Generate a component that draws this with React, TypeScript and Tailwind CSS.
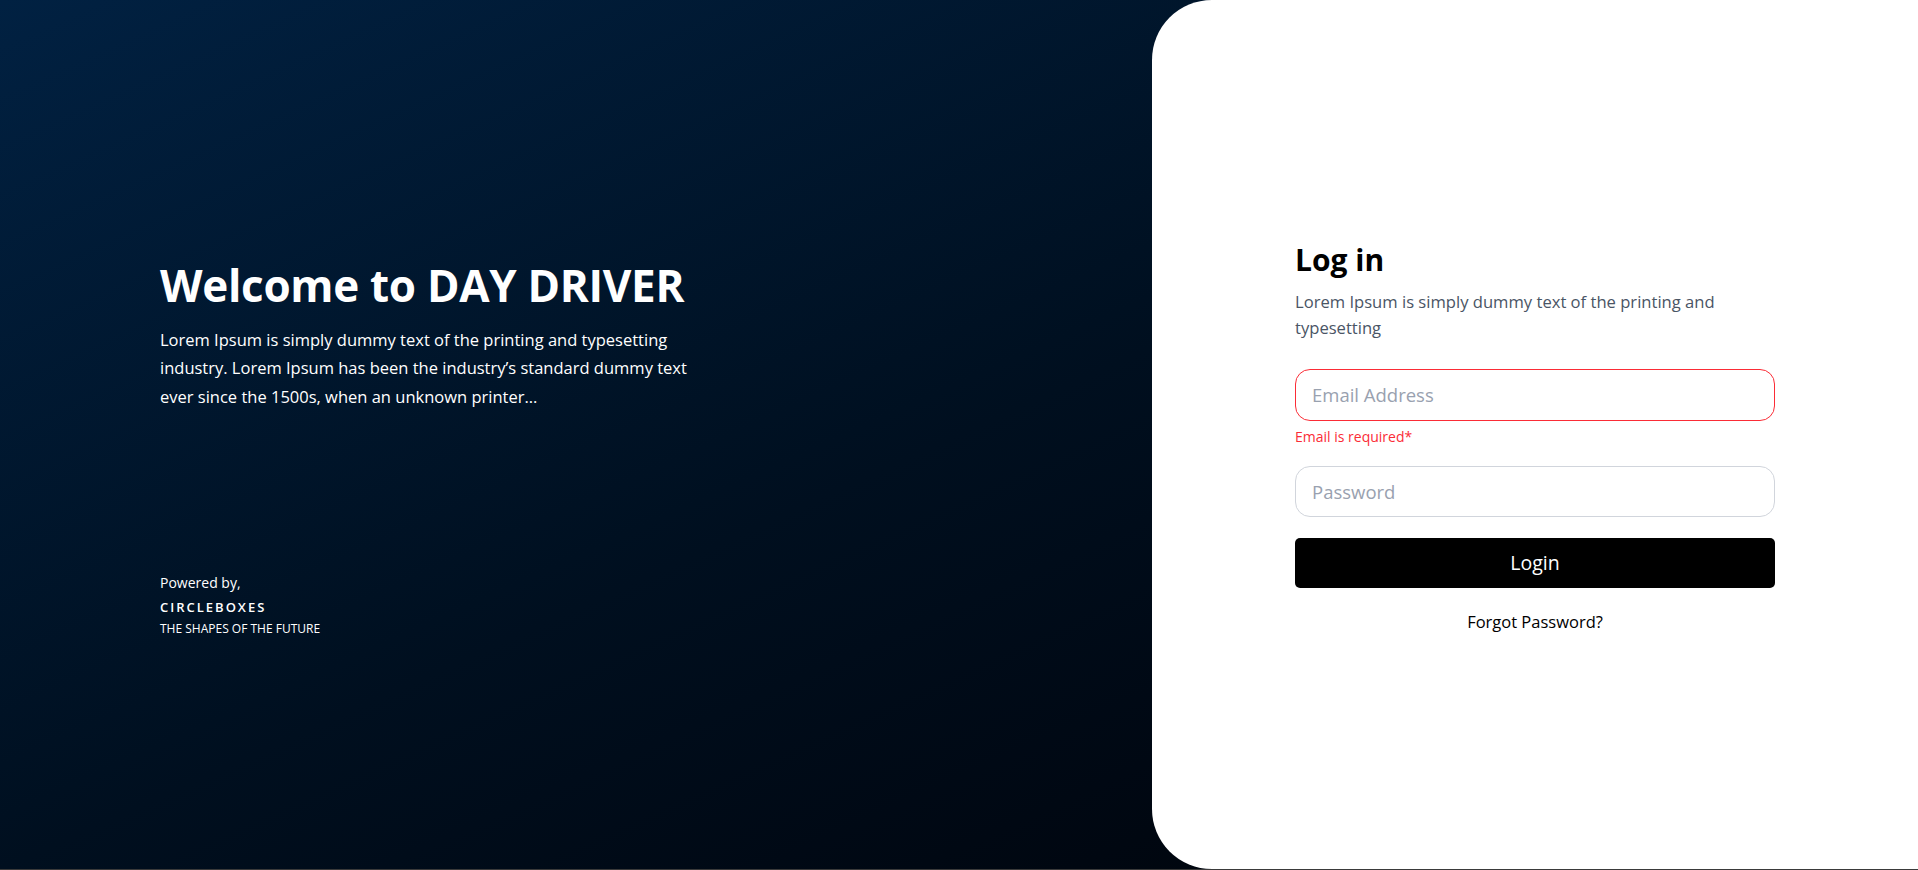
import React from 'react';

const font = { fontFamily: '"Open Sans", "Noto Sans", sans-serif' };

const App: React.FC = () => {
  return (
    <div
      className="flex h-[870px] w-full bg-linear-to-br from-[#012142] via-[#000f1f] to-[#000307] border-b border-[#3a3a3a]"
      style={font}
    >
      {/* left intro */}
      <div className="flex flex-1 flex-col justify-center pl-[160px] pt-[28px] text-white">
        <h1 className="text-[44px] font-bold leading-tight tracking-[-0.3px]">Welcome to DAY DRIVER</h1>
        <p className="mt-[13px] w-[560px] text-[16.5px] leading-[28.5px]">
          Lorem Ipsum is simply dummy text of the printing and typesetting industry. Lorem Ipsum has been the
          industry’s standard dummy text ever since the 1500s, when an unknown printer...
        </p>
        <div className="mt-[160px]">
          <p className="text-[14px] leading-6">Powered by,</p>
          <p className="text-[13px] font-semibold tracking-[2px] leading-6">CIRCLEBOXES</p>
          <p className="text-[12px] leading-5">THE SHAPES OF THE FUTURE</p>
        </div>
      </div>

      {/* login card */}
      <div className="flex w-[766px] items-center justify-center rounded-l-[60px] bg-white pt-[6px]">
        <form className="w-[480px]" onSubmit={(e) => e.preventDefault()}>
          <h2 className="text-[30px] font-bold leading-[36px] text-black">Log in</h2>
          <p className="mt-[11px] text-[16.6px] leading-[26px] text-gray-600">
            Lorem Ipsum is simply dummy text of the printing and typesetting
          </p>
          <input
            type="email"
            placeholder="Email Address"
            className="mt-[28px] h-[52px] w-full rounded-[15px] border border-red-500 px-4 text-[18.5px] outline-none placeholder:text-gray-400"
          />
          <p className="mt-[6px] text-[14px] leading-5 text-red-500">Email is required*</p>
          <input
            type="password"
            placeholder="Password"
            className="mt-[19px] h-[51px] w-full rounded-[15px] border border-gray-300 px-4 text-[18.5px] outline-none placeholder:text-gray-400"
          />
          <button
            type="submit"
            className="mt-[21px] h-[50px] w-full rounded-[5px] bg-black text-[19.5px] text-white"
          >
            Login
          </button>
          <p className="mt-[21px] text-center text-[16.5px] leading-[25px] text-black">Forgot Password?</p>
        </form>
      </div>
    </div>
  );
};

export default App;
